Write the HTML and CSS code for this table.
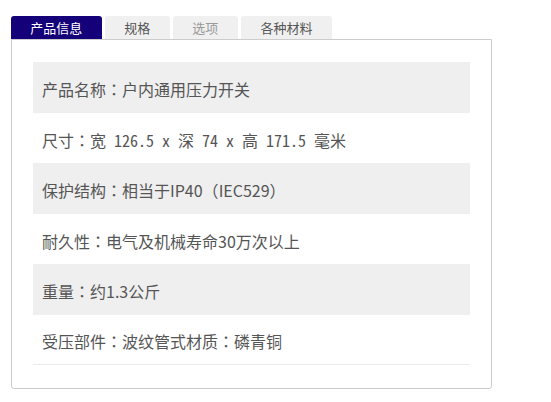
FILE: index.html
```html
<!DOCTYPE html>
<html lang="zh-CN">
<head>
<meta charset="utf-8">
<link rel="stylesheet" href="styles.css">
</head>
<body>
<div class="wrap">
  <div class="tabs">
    <div class="tab active">产品信息</div>
    <div class="tab short">规格</div>
    <div class="tab short light">选项</div>
    <div class="tab">各种材料</div>
  </div>
  <div class="panel">
    <div class="row gray">产品名称<span class="c">：</span>户内通用压力开关</div>
    <div class="row mono">尺寸<span class="c">：</span>宽 126.5 x 深 74 x 高 171.5 毫米</div>
    <div class="row gray">保护结构<span class="c">：</span>相当于IP40<span class="c">（</span>IEC529<span class="c">）</span></div>
    <div class="row">耐久性<span class="c">：</span>电气及机械寿命30万次以上</div>
    <div class="row gray">重量<span class="c">：</span>约1.3公斤</div>
    <div class="row last">受压部件<span class="c">：</span>波纹管式材质<span class="c">：</span>磷青铜</div>
  </div>
</div>
</body>
</html>
```
FILE: styles.css
```css
html, body {
  margin: 0;
  padding: 0;
  background: #fff;
}
body {
  font-family: "Noto Sans CJK SC", "Noto Sans", sans-serif;
  color: #555;
}
.wrap {
  padding: 16px 0 0 11px;
  width: 481px;
}
.tabs {
  display: flex;
  gap: 3.4px;
  height: 23px;
}
.tab {
  width: 90.7px;
  height: 23px;
  background: #f0f0f0;
  border-radius: 3px 3px 0 0;
  font-size: 13px;
  line-height: 23px;
  text-align: center;
  color: #555;
}
.tab.short {
  width: 64.6px;
}
.tab.light {
  color: #999;
}
.tab.active {
  background: #140078;
  color: #fff;
}
.panel {
  border: 1px solid #cccccc;
  border-radius: 0 0 3px 3px;
  padding: 22px 21px 22px 21px;
  height: 304px;
}
.row {
  box-sizing: border-box;
  height: 50.5px;
  display: flex;
  align-items: center;
  padding: 4px 0 0 9px;
  font-size: 16px;
  color: #555;
  white-space: pre;
}
.row.mono {
  font-feature-settings: "hwid" 1;
}
.row .c {
  font-family: "Noto Sans CJK JP", "Noto Sans CJK SC", sans-serif;
  font-feature-settings: normal;
}
.row.gray {
  background: #efefef;
}
.row.last {
  border-bottom: 1px solid #eaeaea;
}
```
